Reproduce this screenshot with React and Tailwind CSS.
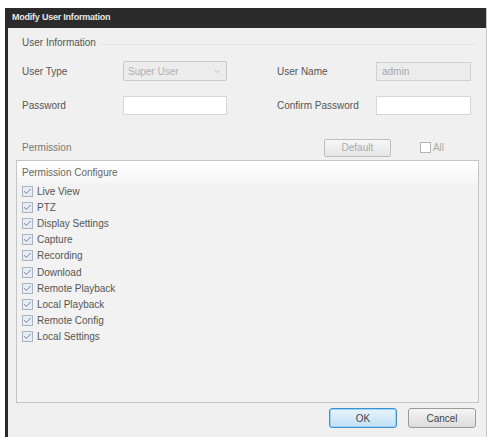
import { Check, ChevronDown } from 'lucide-react';

const perms = [
    'Live View', 'PTZ', 'Display Settings', 'Capture', 'Recording',
    'Download', 'Remote Playback', 'Local Playback', 'Remote Config', 'Local Settings'
];

function Box({ checked }) {
    return (
        <div className="w-[11px] h-[11px] border border-[#a9b3c2] bg-[#e8ecf2] flex items-center justify-center">
            {checked && <Check size={9} strokeWidth={2.5} className="text-[#6a7a94]" />}
        </div>
    );
}

export default function App() {
    return (
        <div className="w-[490px] h-[437px] bg-white pt-[8px] pl-[5px] overflow-hidden font-['Liberation_Sans',sans-serif] text-[10px] text-[#555]">
            <div className="w-[482px] h-[440px] border-l-[3px] border-[#2a2a2a] border-r border-r-[#c8c8c8] bg-[#f0f0f0] flex flex-col">
                {/* Title bar */}
                <div className="h-[20px] bg-[#2b2b2b] flex items-center pl-[4px] text-[#e8e8e8] text-[9px] font-bold tracking-tight">
                    Modify User Information
                </div>

                <div className="flex-1 flex flex-col pl-[9px] pr-[8px]">
                    {/* User Information group */}
                    <div className="flex items-center h-[26px] mt-[1px]">
                        <span className="pl-[5px]">User Information</span>
                        <div className="flex-1 h-px bg-[#e2e2e2] ml-[6px] mr-[4px] mt-[4px]"></div>
                    </div>

                    <div className="flex items-center mt-[6px] h-[20px]">
                        <span className="w-[106px] pl-[5px]">User Type</span>
                        <div className="w-[104px] h-[20px] border border-[#c9c9c9] rounded-[2px] bg-[#ececec] flex items-center justify-between px-[4px] text-[#b0b0b0]">
                            <span>Super User</span>
                            <ChevronDown size={9} className="text-[#b0b0b0]" />
                        </div>
                        <span className="w-[99px] ml-[50px]">User Name</span>
                        <div className="w-[95px] h-[19px] border border-[#cfcfcf] bg-[#ececec] flex items-center px-[5px] text-[#a8a8a8]">
                            admin
                        </div>
                    </div>

                    <div className="flex items-center mt-[14px] h-[20px]">
                        <span className="w-[106px] pl-[5px]">Password</span>
                        <div className="w-[104px] h-[19px] border border-[#d6d6d6] bg-white"></div>
                        <span className="w-[99px] ml-[50px]">Confirm Password</span>
                        <div className="w-[95px] h-[19px] border border-[#d6d6d6] bg-white"></div>
                    </div>

                    {/* Permission row */}
                    <div className="flex items-center mt-[23px] h-[19px]">
                        <span className="pl-[5px] text-[#777]">Permission</span>
                        <div className="ml-auto w-[67px] h-[18px] border border-[#bdbdbd] rounded-[2px] bg-gradient-to-b from-[#f6f6f6] to-[#e6e6e6] flex items-center justify-center text-[#aaa]">
                            Default
                        </div>
                        <div className="flex items-center ml-[29px] mr-[34px] text-[#aaa]">
                            <div className="w-[11px] h-[11px] border border-[#b5b5b5] bg-white"></div>
                            <span className="ml-[2px]">All</span>
                        </div>
                    </div>

                    {/* Permission Configure panel */}
                    <div className="mt-[3px] h-[243px] w-[463px] -ml-[1px] border border-[#c4c4c4] bg-[#f2f2f2] flex flex-col">
                        <div className="h-[22px] bg-gradient-to-b from-white to-[#f6f6f6] flex items-center pl-[5px] text-[#666]">
                            Permission Configure
                        </div>
                        <div className="flex flex-col pl-[5px]">
                            {perms.map(p => (
                                <div key={p} className="h-[16.2px] flex items-center gap-[4px] text-[#555]">
                                    <Box checked />
                                    <span>{p}</span>
                                </div>
                            ))}
                        </div>
                    </div>

                    {/* Buttons */}
                    <div className="flex justify-end gap-[11px] mt-[5px] mr-[2px]">
                        <div className="w-[68px] h-[20px] rounded-[3px] border border-[#3c8fd0] bg-gradient-to-b from-[#e8f4fc] to-[#bfe0f6] shadow-[inset_0_0_0_1px_#9fd2f4] flex items-center justify-center text-[#444]">
                            OK
                        </div>
                        <div className="w-[68px] h-[20px] rounded-[3px] border border-[#9a9a9a] bg-gradient-to-b from-[#f4f4f4] to-[#dcdcdc] flex items-center justify-center text-[#444]">
                            Cancel
                        </div>
                    </div>
                </div>
            </div>
        </div>
    );
}
